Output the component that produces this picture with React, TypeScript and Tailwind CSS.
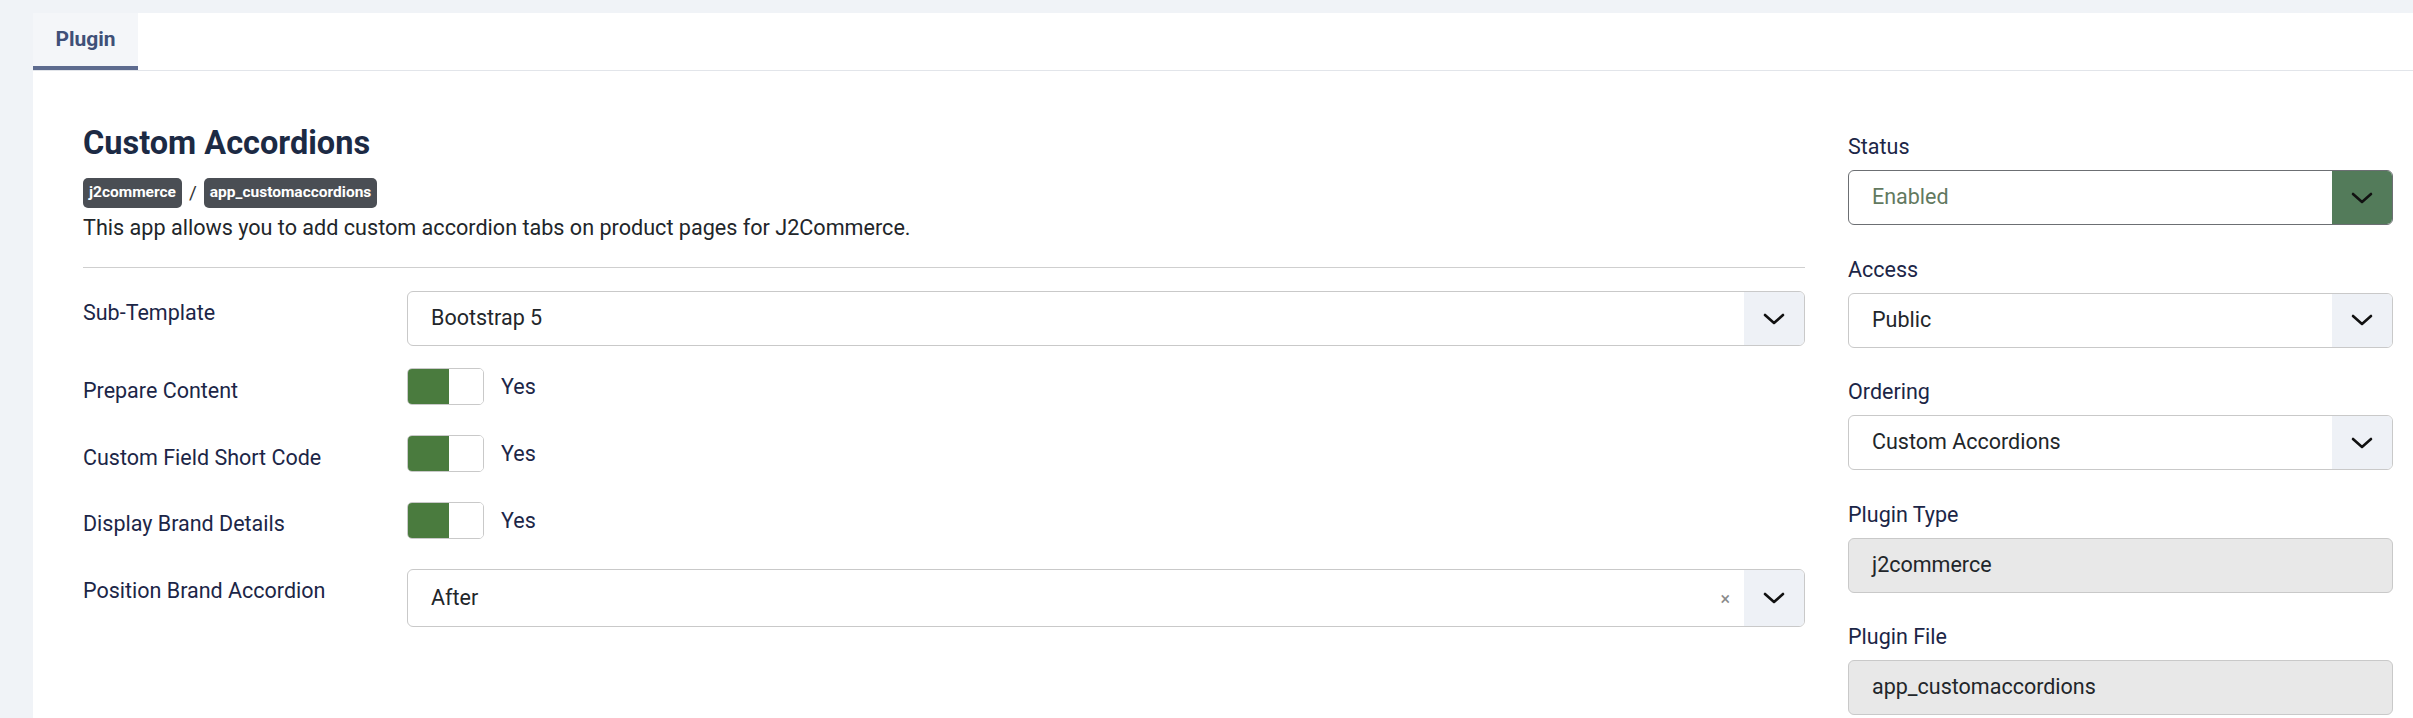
import React from "react";

const Chevron: React.FC = () => (
    <svg width="22" height="12" viewBox="0 0 22 12" fill="none">
        <polyline points="2,2 11,10 20,2" stroke="#111" strokeWidth="2.6" strokeLinecap="round" strokeLinejoin="round" />
    </svg>
);

const Select: React.FC<{ value: string; tall?: boolean; clear?: boolean }> = ({ value, tall, clear }) => (
    <div className={`flex ${tall ? "h-[58px]" : "h-[55px]"} rounded-[6px] border border-[#c9c9c9] bg-white overflow-hidden`}>
        <div className="flex-1 flex items-center pl-[23px] text-[21.5px] text-[#22262a]">{value}</div>
        {clear && <div className="flex items-center pr-[14px] text-[18px] text-[#8a8a8a]">×</div>}
        <div className="w-[60px] flex items-center justify-center bg-[#eef1f6]">
            <Chevron />
        </div>
    </div>
);

const Toggle: React.FC = () => (
    <div className="flex items-center gap-[17px]">
        <div className="flex w-[77px] h-[37px] rounded-[5px] border border-[#c9c9c9] overflow-hidden">
            <div className="w-[41px] bg-[#4a7b3e]" />
            <div className="flex-1 bg-white" />
        </div>
        <span className="text-[21.5px] leading-[26px] text-[#1c2647]">Yes</span>
    </div>
);

const FieldRow: React.FC<{ label: string; children: React.ReactNode; mt: string; pt?: string }> = ({ label, children, mt, pt = "pt-[9px]" }) => (
    <div className={`flex ${mt}`}>
        <div className={`w-[324px] shrink-0 ${pt} text-[21.5px] leading-[26px] text-[#1c2647]`}>{label}</div>
        <div className="flex-1">{children}</div>
    </div>
);

const SideField: React.FC<{ label: string; children: React.ReactNode; first?: boolean }> = ({ label, children, first }) => (
    <div className={first ? "" : "mt-[31.5px]"}>
        <div className="text-[21.5px] leading-[26px] text-[#1c2647] mb-[10px]">{label}</div>
        {children}
    </div>
);

const App: React.FC = () => {
    return (
        <div className="h-[718px] bg-[#f0f3f7] pl-[33px] pt-[13px] overflow-hidden" style={{ fontFamily: "Roboto, 'Noto Sans', sans-serif" }}>
            <div className="h-full bg-white">
                {/* Tabs */}
                <div className="flex h-[58px] border-b border-[#e2e5ea]">
                    <div className="w-[105px] flex items-center justify-center bg-[#f4f6f9] border-b-4 border-[#5d6b8f] text-[21px] font-bold text-[#3f5078]">
                        Plugin
                    </div>
                </div>

                <div className="flex pl-[50px] pr-[20px] gap-[43px]">
                    {/* Main settings */}
                    <div className="flex-1 pt-[54px]">
                        <h2 className="text-[32.5px] leading-[36px] font-bold text-[#1c2a44]">Custom Accordions</h2>
                        <div className="flex items-center mt-[17px] gap-[7px]">
                            <span className="h-[30px] px-[6px] flex items-center rounded-[5px] bg-[#4a4e54] text-white font-bold text-[15.5px]">j2commerce</span>
                            <span className="text-[19px] text-[#333]">/</span>
                            <span className="h-[30px] px-[6px] flex items-center rounded-[5px] bg-[#4a4e54] text-white font-bold text-[15.5px]">app_customaccordions</span>
                        </div>
                        <p className="mt-[5px] text-[21.6px] leading-[30px] text-[#22262a]">
                            This app allows you to add custom accordion tabs on product pages for J2Commerce.
                        </p>
                        <div className="mt-[24px] border-t border-[#cfcfcf]" />

                        <FieldRow label="Sub-Template" mt="mt-[23px]">
                            <Select value="Bootstrap 5" />
                        </FieldRow>
                        <FieldRow label="Prepare Content" mt="mt-[22px]" pt="pt-[10px]">
                            <Toggle />
                        </FieldRow>
                        <FieldRow label="Custom Field Short Code" mt="mt-[30px]" pt="pt-[10px]">
                            <Toggle />
                        </FieldRow>
                        <FieldRow label="Display Brand Details" mt="mt-[30px]" pt="pt-[9px]">
                            <Toggle />
                        </FieldRow>
                        <FieldRow label="Position Brand Accordion" mt="mt-[30px]" pt="pt-[9px]">
                            <Select value="After" tall clear />
                        </FieldRow>
                    </div>

                    {/* Sidebar */}
                    <div className="w-[545px] shrink-0 pt-[63px]">
                        <SideField label="Status" first>
                            <div className="flex h-[55px] rounded-[6px] border border-[#6c6f73] bg-white overflow-hidden">
                                <div className="flex-1 flex items-center pl-[23px] text-[21.5px] text-[#62795f]">Enabled</div>
                                <div className="w-[60px] flex items-center justify-center bg-[#537b5a]">
                                    <Chevron />
                                </div>
                            </div>
                        </SideField>
                        <SideField label="Access">
                            <Select value="Public" />
                        </SideField>
                        <SideField label="Ordering">
                            <Select value="Custom Accordions" />
                        </SideField>
                        <SideField label="Plugin Type">
                            <div className="h-[55px] flex items-center pl-[23px] rounded-[6px] border border-[#c9c9c9] bg-[#e8e8e8] text-[21.5px] text-[#22262a]">j2commerce</div>
                        </SideField>
                        <SideField label="Plugin File">
                            <div className="h-[55px] flex items-center pl-[23px] rounded-[6px] border border-[#c9c9c9] bg-[#e8e8e8] text-[21.5px] text-[#22262a]">app_customaccordions</div>
                        </SideField>
                    </div>
                </div>
            </div>
        </div>
    );
};

export default App;
